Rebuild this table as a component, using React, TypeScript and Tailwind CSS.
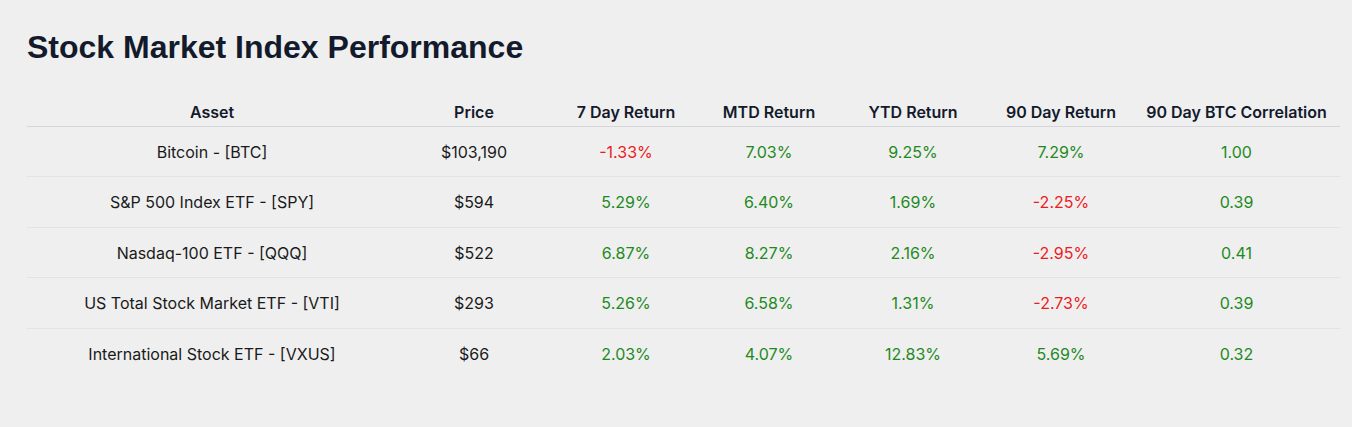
import * as React from "react";

type Row = {
  asset: string;
  price: string;
  d7: number;
  mtd: number;
  ytd: number;
  d90: number;
  corr: string;
};

const ROWS: Row[] = [
  { asset: "Bitcoin - [BTC]", price: "$103,190", d7: -1.33, mtd: 7.03, ytd: 9.25, d90: 7.29, corr: "1.00" },
  { asset: "S&P 500 Index ETF - [SPY]", price: "$594", d7: 5.29, mtd: 6.4, ytd: 1.69, d90: -2.25, corr: "0.39" },
  { asset: "Nasdaq-100 ETF - [QQQ]", price: "$522", d7: 6.87, mtd: 8.27, ytd: 2.16, d90: -2.95, corr: "0.41" },
  { asset: "US Total Stock Market ETF - [VTI]", price: "$293", d7: 5.26, mtd: 6.58, ytd: 1.31, d90: -2.73, corr: "0.39" },
  { asset: "International Stock ETF - [VXUS]", price: "$66", d7: 2.03, mtd: 4.07, ytd: 12.83, d90: 5.69, corr: "0.32" },
];

const HEADERS = [
  "Asset",
  "Price",
  "7 Day Return",
  "MTD Return",
  "YTD Return",
  "90 Day Return",
  "90 Day BTC Correlation",
];

function Pct({ v }: { v: number }) {
  return (
    <span className={v < 0 ? "text-[#eb1c22]" : "text-[#1e8a1e]"}>
      {v.toFixed(2)}%
    </span>
  );
}

export default function App() {
  return (
    <div className="min-h-[427px] bg-[#efefef] px-[27px] pt-[28px] font-['Inter',sans-serif] text-[#111827]">
      <h1 className="font-['Liberation_Sans',Arial,sans-serif] text-[32px] leading-[38px] font-bold text-[#131a2b]">
        Stock Market Index Performance
      </h1>

      <table className="mt-[30px] w-[1313px] table-fixed border-collapse text-[16px]">
        <colgroup>
          <col className="w-[370px]" />
          <col className="w-[154px]" />
          <col className="w-[150px]" />
          <col className="w-[136px]" />
          <col className="w-[152px]" />
          <col className="w-[144px]" />
          <col className="w-[207px]" />
        </colgroup>
        <thead>
          <tr className="border-b border-[#d4d6da]">
            {HEADERS.map((h) => (
              <th key={h} className="h-[30px] pt-[2px] text-center align-middle font-semibold text-[#131a2b]">
                {h}
              </th>
            ))}
          </tr>
        </thead>
        <tbody>
          {ROWS.map((r, i) => (
            <tr
              key={r.asset}
              className={i < ROWS.length - 1 ? "border-b border-[#e3e3e3]" : ""}
            >
              <td className="h-[50.5px] pt-[1px] text-center text-[#1a1a1a]">{r.asset}</td>
              <td className="pt-[1px] text-center text-[#1a1a1a]">{r.price}</td>
              <td className="pt-[1px] text-center"><Pct v={r.d7} /></td>
              <td className="pt-[1px] text-center"><Pct v={r.mtd} /></td>
              <td className="pt-[1px] text-center"><Pct v={r.ytd} /></td>
              <td className="pt-[1px] text-center"><Pct v={r.d90} /></td>
              <td className="pt-[1px] text-center text-[#1e8a1e]">{r.corr}</td>
            </tr>
          ))}
        </tbody>
      </table>
    </div>
  );
}
